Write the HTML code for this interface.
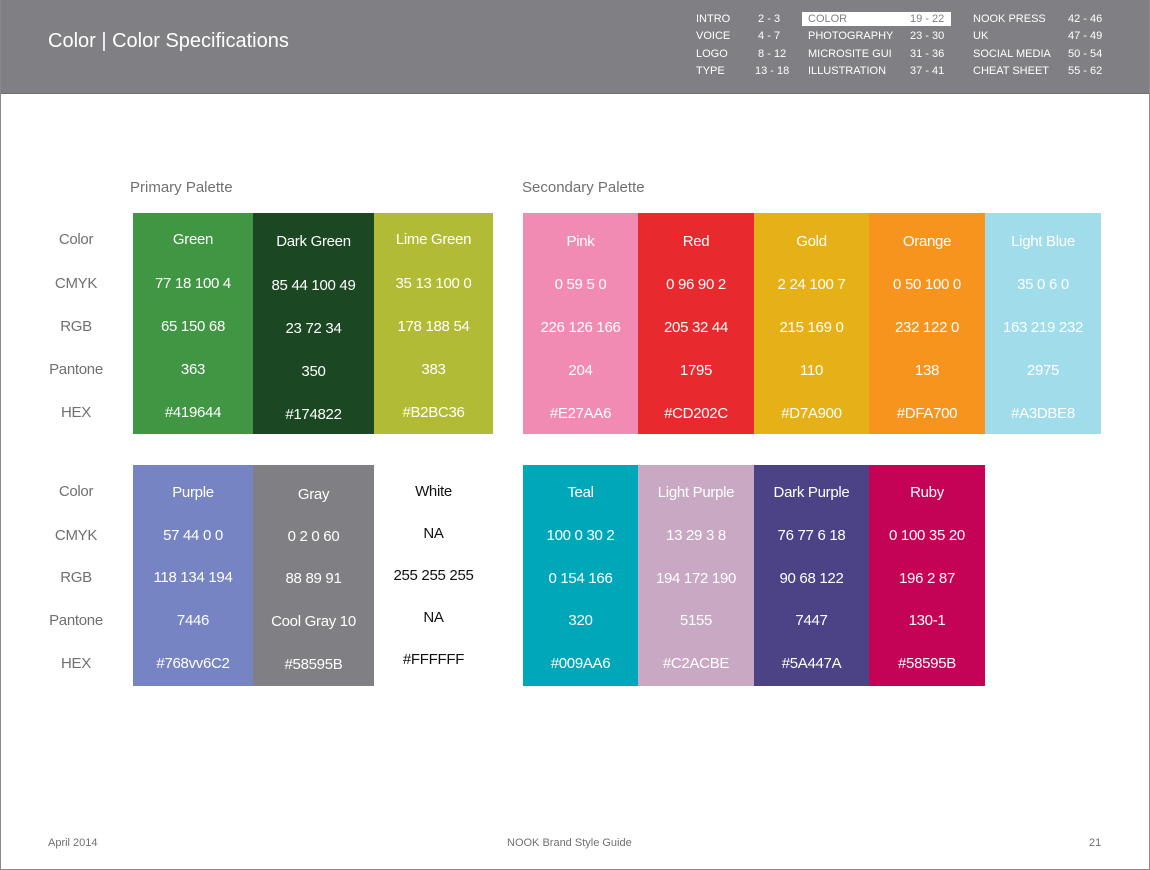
<!DOCTYPE html>
<html><head><meta charset="utf-8"><style>
*{margin:0;padding:0;box-sizing:border-box}
body{width:1150px;height:870px;position:relative;background:#fff;font-family:"Liberation Sans",sans-serif;overflow:hidden}
.frame{position:absolute;left:0;top:0;width:1150px;height:870px;border:1px solid #8a8a8a;border-top:none}
.hdr{position:absolute;left:0;top:0;width:1150px;height:94px;background:#807f83;border-bottom:1px solid #6e6e70}
.title{position:absolute;left:48px;top:30px;color:#fff;font-size:20px}
.nav{position:absolute;color:#fff;font-size:11px;line-height:17.3px}
.sel{position:absolute;left:802px;top:12px;width:149px;height:14px;background:#fff}
.col{position:absolute;width:120px;height:221px;color:#fff}
.col span,.lab span{position:absolute;left:0;width:100%;text-align:center;font-size:15px;line-height:20px;white-space:nowrap;letter-spacing:-0.3px;transform:translateY(2px)}
.lab{position:absolute;left:18px;width:116px;color:#707070}
.ph{position:absolute;top:179px;color:#707070;font-size:15px}
.ft{position:absolute;top:837px;color:#707070;font-size:11px}
</style></head><body>
<div class="hdr"></div>
<div class="frame"></div>
<div class="title">Color | Color Specifications</div>
<div class="sel"></div>
<div class="nav" style="left:696px;top:11px">INTRO<br>VOICE<br>LOGO<br>TYPE</div>
<div class="nav" style="left:755px;top:11px;width:40px">&nbsp;2 - 3<br>&nbsp;4 - 7<br>&nbsp;8 - 12<br>13 - 18</div>
<div class="nav" style="left:808px;top:11px"><span style="color:#807f83">COLOR</span><br>PHOTOGRAPHY<br>MICROSITE GUI<br>ILLUSTRATION</div>
<div class="nav" style="left:910px;top:11px"><span style="color:#807f83">19 - 22</span><br>23 - 30<br>31 - 36<br>37 - 41</div>
<div class="nav" style="left:973px;top:11px">NOOK PRESS<br>UK<br>SOCIAL MEDIA<br>CHEAT SHEET</div>
<div class="nav" style="left:1068px;top:11px">42 - 46<br>47 - 49<br>50 - 54<br>55 - 62</div>

<div class="ph" style="left:130px">Primary Palette</div>
<div class="ph" style="left:522px">Secondary Palette</div>

<div class="lab" style="top:213px;left:18px"><span style="top:15px">Color</span><span style="top:59px">CMYK</span><span style="top:102px">RGB</span><span style="top:145px">Pantone</span><span style="top:188px">HEX</span></div>
<div class="lab" style="top:465px;left:18px"><span style="top:15px">Color</span><span style="top:59px">CMYK</span><span style="top:101px">RGB</span><span style="top:144px">Pantone</span><span style="top:187px">HEX</span></div>

<div class="col" style="left:133px;top:213px;background:#419644"><span style="top:15px">Green</span><span style="top:59px">77 18 100 4</span><span style="top:102px">65 150 68</span><span style="top:145px">363</span><span style="top:188px">#419644</span></div>
<div class="col" style="left:253px;top:213px;background:#1b4822;width:121px"><span style="top:17px">Dark Green</span><span style="top:61px">85 44 100 49</span><span style="top:104px">23 72 34</span><span style="top:147px">350</span><span style="top:190px">#174822</span></div>
<div class="col" style="left:374px;top:213px;background:#b2bb36;width:119px"><span style="top:15px">Lime Green</span><span style="top:59px">35 13 100 0</span><span style="top:102px">178 188 54</span><span style="top:145px">383</span><span style="top:188px">#B2BC36</span></div>

<div class="col" style="left:523px;top:213px;width:115px;background:#f18bb3"><span style="top:17px">Pink</span><span style="top:60px">0 59 5 0</span><span style="top:103px">226 126 166</span><span style="top:146px">204</span><span style="top:189px">#E27AA6</span></div>
<div class="col" style="left:638px;top:213px;width:116px;background:#e8292e"><span style="top:17px">Red</span><span style="top:60px">0 96 90 2</span><span style="top:103px">205 32 44</span><span style="top:146px">1795</span><span style="top:189px">#CD202C</span></div>
<div class="col" style="left:754px;top:213px;width:115px;background:#e5b116"><span style="top:17px">Gold</span><span style="top:60px">2 24 100 7</span><span style="top:103px">215 169 0</span><span style="top:146px">110</span><span style="top:189px">#D7A900</span></div>
<div class="col" style="left:869px;top:213px;width:116px;background:#f7941e"><span style="top:17px">Orange</span><span style="top:60px">0 50 100 0</span><span style="top:103px">232 122 0</span><span style="top:146px">138</span><span style="top:189px">#DFA700</span></div>
<div class="col" style="left:985px;top:213px;width:116px;background:#a0dcea"><span style="top:17px">Light Blue</span><span style="top:60px">35 0 6 0</span><span style="top:103px">163 219 232</span><span style="top:146px">2975</span><span style="top:189px">#A3DBE8</span></div>

<div class="col" style="left:133px;top:465px;background:#7684c3"><span style="top:16px">Purple</span><span style="top:59px">57 44 0 0</span><span style="top:101px">118 134 194</span><span style="top:144px">7446</span><span style="top:187px">#768vv6C2</span></div>
<div class="col" style="left:253px;top:465px;background:#807f83;width:121px"><span style="top:18px">Gray</span><span style="top:60px">0 2 0 60</span><span style="top:102px">88 89 91</span><span style="top:145px">Cool Gray 10</span><span style="top:188px">#58595B</span></div>
<div class="col" style="left:374px;top:465px;width:119px;color:#111"><span style="top:15px">White</span><span style="top:57px">NA</span><span style="top:99px">255 255 255</span><span style="top:141px">NA</span><span style="top:183px">#FFFFFF</span></div>

<div class="col" style="left:523px;top:465px;width:115px;background:#00a7b8"><span style="top:16px">Teal</span><span style="top:59px">100 0 30 2</span><span style="top:102px">0 154 166</span><span style="top:144px">320</span><span style="top:187px">#009AA6</span></div>
<div class="col" style="left:638px;top:465px;width:116px;background:#c8a8c2"><span style="top:16px">Light Purple</span><span style="top:59px">13 29 3 8</span><span style="top:102px">194 172 190</span><span style="top:144px">5155</span><span style="top:187px">#C2ACBE</span></div>
<div class="col" style="left:754px;top:465px;width:115px;background:#4b4386"><span style="top:16px">Dark Purple</span><span style="top:59px">76 77 6 18</span><span style="top:102px">90 68 122</span><span style="top:144px">7447</span><span style="top:187px">#5A447A</span></div>
<div class="col" style="left:869px;top:465px;width:116px;background:#c40256"><span style="top:16px">Ruby</span><span style="top:59px">0 100 35 20</span><span style="top:102px">196 2 87</span><span style="top:144px">130-1</span><span style="top:187px">#58595B</span></div>

<div class="ft" style="left:48px">April 2014</div>
<div class="ft" style="left:507px">NOOK Brand Style Guide</div>
<div class="ft" style="left:1089px">21</div>
</body></html>
